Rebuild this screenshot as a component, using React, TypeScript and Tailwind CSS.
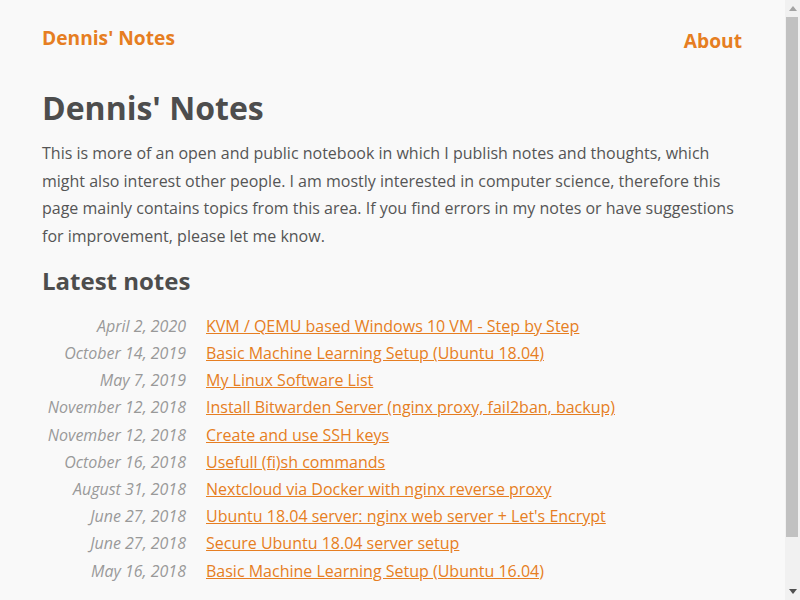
import React from "react";

const notes: [string, string][] = [
  ["April 2, 2020", "KVM / QEMU based Windows 10 VM - Step by Step"],
  ["October 14, 2019", "Basic Machine Learning Setup (Ubuntu 18.04)"],
  ["May 7, 2019", "My Linux Software List"],
  ["November 12, 2018", "Install Bitwarden Server (nginx proxy, fail2ban, backup)"],
  ["November 12, 2018", "Create and use SSH keys"],
  ["October 16, 2018", "Usefull (fi)sh commands"],
  ["August 31, 2018", "Nextcloud via Docker with nginx reverse proxy"],
  ["June 27, 2018", "Ubuntu 18.04 server: nginx web server + Let's Encrypt"],
  ["June 27, 2018", "Secure Ubuntu 18.04 server setup"],
  ["May 16, 2018", "Basic Machine Learning Setup (Ubuntu 16.04)"],
];

function Scrollbar() {
  return (
    <div className="fixed top-0 right-0 h-[600px] w-[15px] bg-[#f1f1f1] flex flex-col items-stretch">
      <div className="h-[17px] flex items-center justify-center">
        <svg width="8" height="5" viewBox="0 0 8 5">
          <polygon points="4,0 8,5 0,5" fill="#a3a3a3" />
        </svg>
      </div>
      <div className="h-[520px] ml-[1px] mr-[2px] bg-[#c1c1c1]" />
      <div className="flex-1" />
      <div className="h-[17px] flex items-center justify-center">
        <svg width="8" height="5" viewBox="0 0 8 5">
          <polygon points="0,0 8,0 4,5" fill="#505050" />
        </svg>
      </div>
    </div>
  );
}

export default function App() {
  return (
    <div
      className="min-h-[652px] w-[785px] bg-[#f9f9f9] text-[#555555]"
      style={{ fontFamily: '"Open Sans", sans-serif' }}
    >
      <div className="mx-auto w-[701px] pb-[67px]">
        <header className="flex justify-between items-start pt-[24px] pr-[1px]">
          <a href="#" className="text-[19.2px] leading-[28px] font-bold text-[#e67e22]">
            Dennis' Notes
          </a>
          <a href="#" className="mt-[3px] text-[19.2px] leading-[28px] font-bold text-[#e67e22]">
            About
          </a>
        </header>
        <h1 className="mt-[33px] text-[32px] leading-[40px] font-bold text-[#4d4d4d]">
          Dennis' Notes
        </h1>
        <p className="mt-[12px] text-[16px] leading-[27.67px]">
          This is more of an open and public notebook in which I publish notes and thoughts, which
          might also interest other people. I am mostly interested in computer science, therefore
          this page mainly contains topics from this area. If you find errors in my notes or have
          suggestions for improvement, please let me know.
        </p>
        <h2 className="mt-[14px] text-[24px] leading-[32px] font-bold text-[#4d4d4d]">
          Latest notes
        </h2>
        <div className="mt-[16px] grid grid-cols-[144px_1fr] gap-x-[20px] text-[16px] leading-[27.2px]">
          {notes.map(([d, t], i) => (
            <React.Fragment key={i}>
              <div className="text-right italic text-[#999999]">{d}</div>
              <div>
                <a href="#" className="text-[#e67e22] underline">
                  {t}
                </a>
              </div>
            </React.Fragment>
          ))}
        </div>
      </div>
      <Scrollbar />
    </div>
  );
}
